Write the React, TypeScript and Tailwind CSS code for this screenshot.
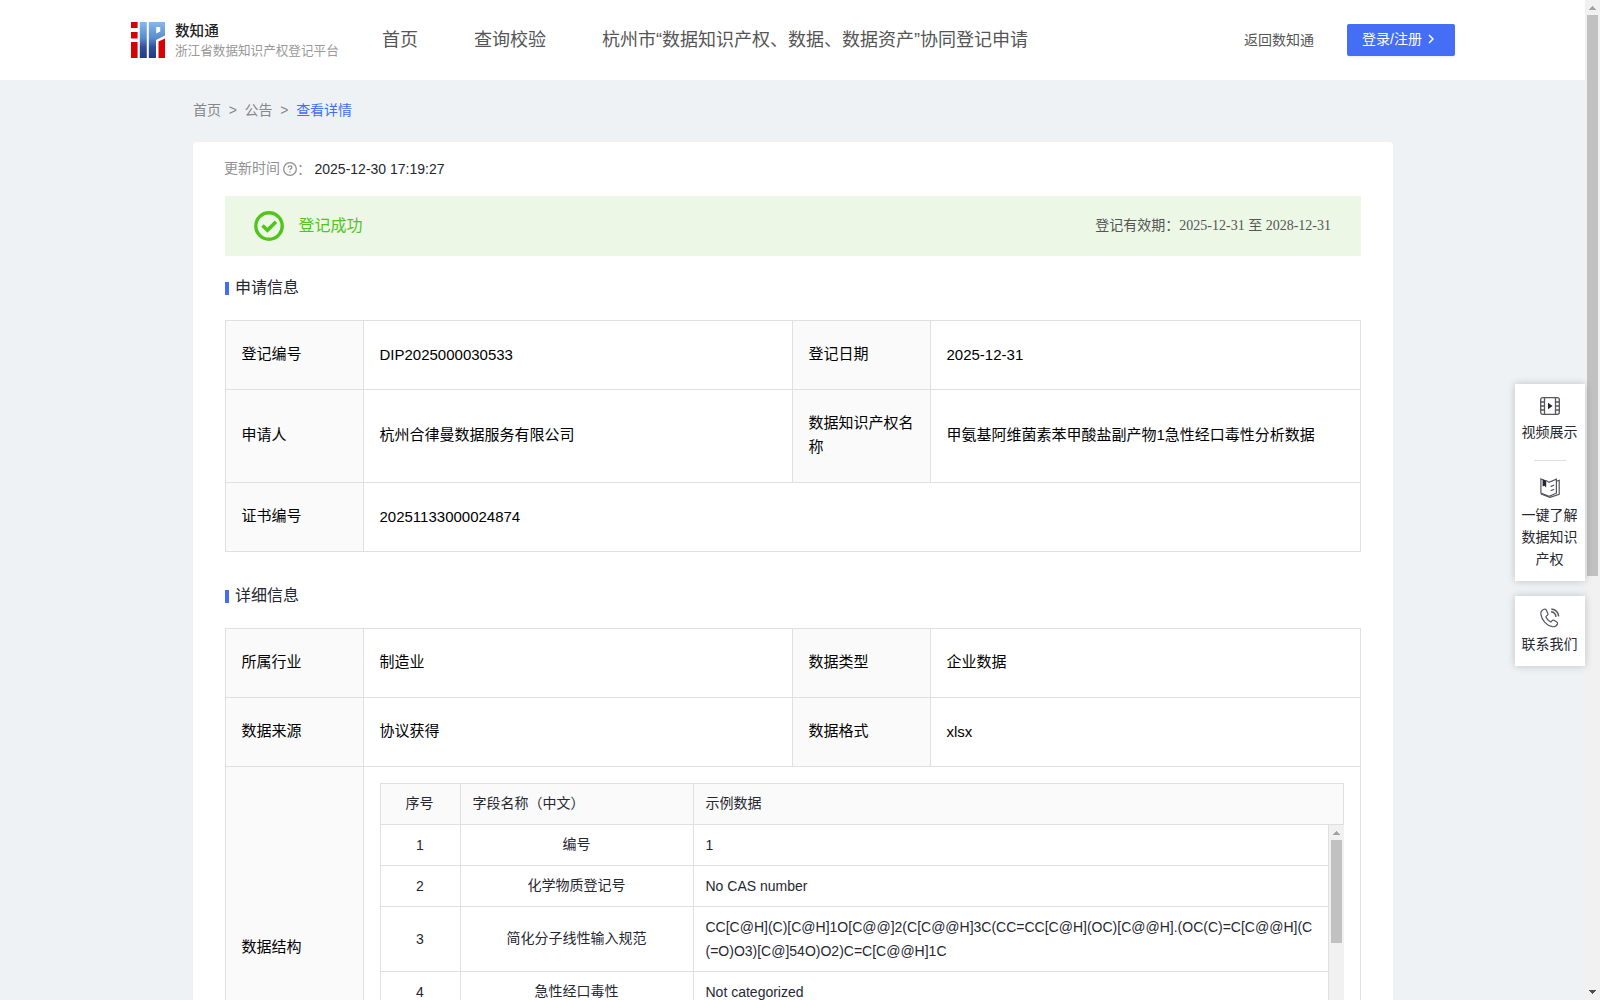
import { ReactNode } from 'react';

interface Field {
  label: string;
  value: string;
}

interface StructureRow {
  id: number;
  name: string;
  lines: string[];
}

const navItems = ['首页', '查询校验', '杭州市“数据知识产权、数据、数据资产”协同登记申请'];

const applyRows: Field[][] = [
  [
    { label: '登记编号', value: 'DIP2025000030533' },
    { label: '登记日期', value: '2025-12-31' },
  ],
  [
    { label: '申请人', value: '杭州合律曼数据服务有限公司' },
    { label: '数据知识产权名称', value: '甲氨基阿维菌素苯甲酸盐副产物1急性经口毒性分析数据' },
  ],
  [{ label: '证书编号', value: '20251133000024874' }],
];

const detailRows: Field[][] = [
  [
    { label: '所属行业', value: '制造业' },
    { label: '数据类型', value: '企业数据' },
  ],
  [
    { label: '数据来源', value: '协议获得' },
    { label: '数据格式', value: 'xlsx' },
  ],
];

const structureRows: StructureRow[] = [
  { id: 1, name: '编号', lines: ['1'] },
  { id: 2, name: '化学物质登记号', lines: ['No CAS number'] },
  {
    id: 3,
    name: '简化分子线性输入规范',
    lines: [
      'CC[C@H](C)[C@H]1O[C@@]2(C[C@@H]3C(CC=CC[C@H](OC)[C@@H].(OC(C)=C[C@@H](C',
      '(=O)O3)[C@]54O)O2)C=C[C@@H]1C',
    ],
  },
  { id: 4, name: '急性经口毒性', lines: ['Not categorized'] },
];

const isLatin = (text: string) => /^[\w-]+$/.test(text);

function Logo() {
  return (
    <svg width="34" height="36" viewBox="0 0 34 36">
      <defs>
        <linearGradient id="logoBlue" gradientUnits="userSpaceOnUse" x1="0" y1="0" x2="0" y2="36">
          <stop offset="0" stopColor="#86b8ee" />
          <stop offset="0.45" stopColor="#5a8bcd" />
          <stop offset="0.7" stopColor="#2f4f9c" />
          <stop offset="1" stopColor="#243a85" />
        </linearGradient>
      </defs>
      <path fill="#d40404" d="M0 0h6.600v6H0zM0 10h6.600v6.500H0zM0 20h6.600v16H0zM27.500 19.500L34 16.500V36h-6.500z" />
      <path
        fill="url(#logoBlue)"
        fillRule="evenodd"
        d="M8.800 0h7v36h-7zM17.800 0H34v13.500l-9 4.500v18h-7.200zM25.200 5v6.500l4-2V5z"
      />
    </svg>
  );
}

function FilmIcon() {
  return (
    <svg width="20" height="18" viewBox="0 0 20 18" fill="none" stroke="#55565e" strokeWidth="1.3">
      <rect x="0.700" y="0.700" width="18.600" height="16.600" rx="2" />
      <path d="M4.500 .6v16.800M15.500 .6v16.800M.6 5h3.900M.6 9h3.900M.6 13h3.900M15.500 5h3.900M15.500 9h3.900M15.500 13h3.900" />
      <path d="M8 5.800v6.400L12.600 9z" fill="#26272f" stroke="none" />
    </svg>
  );
}

function BookIcon() {
  return (
    <svg width="20" height="20" viewBox="0 0 20 20" fill="none" stroke="#55565e" strokeWidth="1.200">
      <path d="M6.200 2.600L9 4.400l7.400-3.200v14L9 18.400.9 15V.9l1.900.8" />
      <path d="M16.400 3.200l2.800-.9v14L10 19.400.9 16" />
      <path d="M10.600 8.600l3.600-1.600M10.600 12.800l3.600-1.600" />
      <path d="M2.600 1l3.600 1.600v7L4.400 7.800 2.600 8.400z" fill="#26272f" stroke="none" />
    </svg>
  );
}

function PhoneIcon() {
  return (
    <svg width="20" height="20" viewBox="0 0 20 20" fill="none" stroke="#55565e" strokeWidth="1.200">
      <path d="M4.200 1.200C1.900 2 .6 4 .9 6.400c.8 5.600 5.800 11.400 11.500 12.300 2.400.3 4.400-.9 5.100-3 .2-.8 0-1.400-.7-1.800l-2.700-1.600c-.7-.4-1.500-.3-2 .3l-.8 1c-.3.3-.7.4-1.100.2-2-1.100-3.300-2.600-4.100-4.600-.2-.4-.1-.8.2-1.100l1.100-.8c.6-.5.7-1.200.4-1.900L6.300 1.900c-.4-.8-1.200-1-2.100-.7z" />
      <path d="M11.300 1c4.100.5 6.900 3.300 7.400 7.300" strokeWidth="1.500" />
      <path d="M11 3.800c2.900.4 4.700 2.200 5 5" strokeWidth="1.500" />
    </svg>
  );
}

function SectionTitle({ children }: { children: ReactNode }) {
  return (
    <div className="flex h-6 items-center">
      <span className="mt-0.5 h-[13px] w-1 bg-[#426df6]" />
      <h2 className="mt-0.5 ml-1.5 text-base leading-6 text-[#26272f]">{children}</h2>
    </div>
  );
}

function FieldRows({ rows }: { rows: Field[][] }) {
  return (
    <>
      {rows.map((row) => (
        <div key={row[0].label} className="flex border-b border-[#e0e0e0]">
          {row.map((field, i) => (
            <div key={field.label} className={row.length === 1 ? 'flex flex-1' : i === 0 ? 'flex w-[566px]' : 'flex flex-1 border-l border-[#e0e0e0]'}>
              <div className="flex w-[138px] items-center border-r border-[#e0e0e0] bg-[#fafafa] pt-[21px] pr-[15px] pb-[23px] pl-[15.5px]">
                {field.label}
              </div>
              <div
                className={`flex flex-1 items-center pr-4 pl-[15.5px] ${isLatin(field.value) ? 'py-[22px]' : 'pt-[21px] pb-[23px]'}`}
              >
                {field.value}
              </div>
            </div>
          ))}
        </div>
      ))}
    </>
  );
}

function StructureTable() {
  return (
    <div className="w-[964px] text-sm leading-6 text-[#26272f]">
      <div className="flex h-[42px] border border-[#e0e0e0] bg-[#fafafa] leading-[39px]">
        <div className="w-20 border-r border-[#e0e0e0] pr-0.5 text-center">序号</div>
        <div className="w-[233px] border-r border-[#e0e0e0] pl-[11.5px]">字段名称（中文）</div>
        <div className="pl-[11.5px]">示例数据</div>
      </div>
      <div className="flex">
        <div className="w-[949px] border-x border-[#e0e0e0]">
          {structureRows.map((row) => (
            <div key={row.id} className="flex border-b border-[#e0e0e0]">
              <div className="flex w-20 items-center justify-center border-r border-[#e0e0e0] py-2 pr-px">{row.id}</div>
              <div className="flex w-[233px] items-center justify-center border-r border-[#e0e0e0] pt-[7px] pr-px pb-[9px]">{row.name}</div>
              <div className="py-2 pl-[11.5px] whitespace-nowrap">
                {row.lines.map((line) => (
                  <p key={line}>{line}</p>
                ))}
              </div>
            </div>
          ))}
        </div>
        <div className="flex w-[15px] flex-col items-center bg-[#f1f1f1]">
          <svg width="15" height="15" viewBox="0 0 15 15">
            <path d="M7 6h1v1h1v1h1v1h1v1H4V9h1V8h1V7h1z" fill="#a3a3a3" />
          </svg>
          <div className="h-[103px] w-[11px] bg-[#c1c1c1]" />
        </div>
      </div>
    </div>
  );
}

function SideBar() {
  return (
    <aside className="absolute top-[384px] right-[15px] flex w-[70px] flex-col gap-[15px] text-center text-sm leading-[22px] text-[#26272f]">
      <div className="flex h-[197px] flex-col items-center bg-white px-1.5 pt-[13px] shadow-[0_0_8px_rgba(0,0,0,0.2)]">
        <FilmIcon />
        <p className="mt-1.5 pr-px">视频展示</p>
        <div className="mt-[17px] h-px w-8 shrink-0 bg-[#dedede]" />
        <div className="mt-[17px]">
          <BookIcon />
        </div>
        <p className="mt-1.5 pr-px">一键了解数据知识产权</p>
      </div>
      <div className="flex h-[70px] flex-col items-center bg-white pt-3 shadow-[0_0_8px_rgba(0,0,0,0.2)]">
        <PhoneIcon />
        <p className="mt-[5px] pr-px">联系我们</p>
      </div>
    </aside>
  );
}

function PageScrollbar() {
  return (
    <div className="flex w-[15px] flex-col items-center bg-[#f1f1f1]">
      <svg width="15" height="15" viewBox="0 0 15 15">
        <path d="M7 6h1v1h1v1h1v1h1v1H4V9h1V8h1V7h1z" fill="#a3a3a3" />
      </svg>
      <div className="h-[561px] w-[11px] bg-[#c1c1c1]" />
      <svg className="mt-auto" width="15" height="15" viewBox="0 0 15 15">
        <path d="M4 5h7v1h-1v1H9v1H8v1H7V8H6V7H5V6H4z" fill="#505050" />
      </svg>
    </div>
  );
}

function App() {
  return (
    <div className="relative flex h-[1000px] w-[1600px] overflow-hidden bg-[#eef2f5] font-['Liberation_Sans','Noto_Sans_CJK_SC',sans-serif]">
      <div className="w-[1585px]">
        <header className="flex h-20 bg-white pl-[131px] text-[#555555]">
          <div className="flex w-[251px] pt-[22px]">
            <Logo />
            <div className="ml-[10px] whitespace-nowrap">
              <div className="text-[14.6px] leading-[18px] font-medium text-[#222222]">数知通</div>
              <div className="text-[12.6px] leading-[22px] text-[#999999]">浙江省数据知识产权登记平台</div>
            </div>
          </div>
          <nav className="flex gap-14 text-lg leading-[80px]">
            {navItems.map((item) => (
              <span key={item}>{item}</span>
            ))}
          </nav>
          <span className="ml-[216px] text-sm leading-[80px]">返回数知通</span>
          <button className="mt-6 ml-[33px] flex h-8 w-[108px] items-center rounded-[2px] bg-[#436ef5] pb-0.5 pl-[15px] text-sm leading-[30px] text-white shadow-[0_2px_0_rgba(0,0,0,0.045)]">
            登录/注册
            <svg className="ml-1.5" width="6" height="10" viewBox="0 0 6 10" fill="none" stroke="currentColor" strokeWidth="1.500">
              <path d="M1 1l4 4-4 4" />
            </svg>
          </button>
        </header>

        <div className="ml-[193px] flex h-[62px] gap-[7.7px] text-sm leading-[61px] text-[#86878c]">
          <span>首页</span>
          <span>&gt;</span>
          <span>公告</span>
          <span>&gt;</span>
          <span className="text-[#426df6]">查看详情</span>
        </div>

        <main className="ml-[193px] h-[1000px] w-[1200px] rounded-[4px] bg-white px-8">
          <div className="flex h-[54px] items-center text-sm text-[#909094]">
            <span className="-ml-px pb-0.5">更新时间</span>
            <svg className="ml-[3px]" width="14" height="14" viewBox="0 0 14 14" fill="none" stroke="currentColor" strokeWidth="1.300">
              <circle cx="7" cy="7" r="6.300" />
              <path d="M5.200 5.600c0-1 .7-1.700 1.800-1.700s1.800.7 1.800 1.600c0 1.200-1.800 1.200-1.800 2.500M7 9.300v1.200" />
            </svg>
            <span>：</span>
            <span className="ml-[3.5px] text-[#26272f]">2025-12-30 17:19:27</span>
          </div>

          <div className="flex h-[60px] items-center bg-[#ecf7e6] pr-[30px] pl-[29px]">
            <svg width="30" height="30" viewBox="0 0 30 30" fill="none" stroke="#52c41a">
              <circle cx="15" cy="15" r="13.200" strokeWidth="3.400" />
              <path d="M8.500 14.500l5 4.800 8.500-8.600" strokeWidth="3.600" />
            </svg>
            <span className="ml-[14.5px] text-base leading-6 text-[#52c41a]">登记成功</span>
            <span className="ml-auto pb-0.5 text-sm text-[#555555]">
              登记有效期：
              <span className="font-['Liberation_Serif','Noto_Sans_CJK_SC',serif]">2025-12-31 至 2028-12-31</span>
            </span>
          </div>

          <div className="pt-[19px]">
            <SectionTitle>申请信息</SectionTitle>
            <div className="mt-[21px] border-x border-t border-[#e0e0e0] text-[15px] leading-6 text-black">
              <FieldRows rows={applyRows} />
            </div>
          </div>

          <div className="pt-[31px]">
            <SectionTitle>详细信息</SectionTitle>
            <div className="mt-[21px] border-x border-t border-[#e0e0e0] text-[15px] leading-6 text-black">
              <FieldRows rows={detailRows} />
              <div className="flex h-[362px] border-b border-[#e0e0e0]">
                <div className="flex w-[138px] items-center border-r border-[#e0e0e0] bg-[#fafafa] pb-0.5 pl-[15.5px]">数据结构</div>
                <div className="flex-1 overflow-hidden px-4 pt-4">
                  <StructureTable />
                </div>
              </div>
            </div>
          </div>
        </main>
      </div>

      <PageScrollbar />
      <SideBar />
    </div>
  );
}

export default App;
